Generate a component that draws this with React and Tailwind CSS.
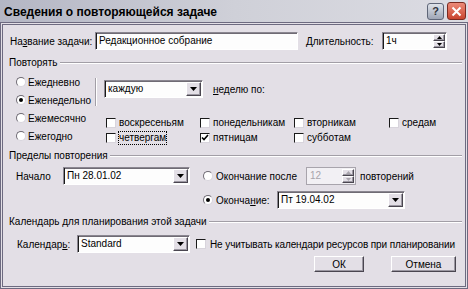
import React from "react";

const sunken =
  "border border-t-[#8a8690] border-l-[#8a8690] border-b-white border-r-white shadow-[inset_1px_0_0_#1a1a1a,inset_0_1px_0_#6f6b74]";
const raised =
  "border border-t-white border-l-white border-b-[#4a4650] border-r-[#4a4650] shadow-[inset_-1px_-1px_0_#9c98a2]";

function Etched({ className = "" }) {
  return <div className={`h-[2px] border-t border-t-[#a29ea6] border-b border-b-white ${className}`} />;
}

function GroupHeader({ title, mt }) {
  return (
    <div className={`flex items-center h-[12px] pl-[6px] pr-[3px] ${mt}`}>
      <span className="whitespace-nowrap leading-none">{title}</span>
      <Etched className="flex-1 ml-[2px]" />
    </div>
  );
}

function DropButton() {
  return (
    <div className={`w-[15px] h-full bg-[#e3dfe6] flex items-center justify-center ${raised}`}>
      <svg width="7" height="4" viewBox="0 0 7 4">
        <path d="M0 0h7L3.5 4z" fill="#000" />
      </svg>
    </div>
  );
}

function Combo({ value, w }) {
  return (
    <div className={`flex items-stretch h-[18px] bg-[#fdfdfd] ${sunken} ${w}`}>
      <span className="flex-1 pl-[3px] leading-[16px] whitespace-nowrap">{value}</span>
      <div className="p-[1px] h-full">
        <DropButton />
      </div>
    </div>
  );
}

function SpinButtons({ disabled }) {
  const c = disabled ? "#a8a4ac" : "#000";
  return (
    <div className="flex flex-col w-[14px] h-full p-[1px] gap-0">
      {[0, 1].map((i) => (
        <div key={i} className={`flex-1 bg-[#e3dfe6] flex items-center justify-center ${raised}`}>
          <svg width="5" height="3" viewBox="0 0 5 3">
            <path d={i === 0 ? "M0 3h5L2.5 0z" : "M0 0h5L2.5 3z"} fill={c} />
          </svg>
        </div>
      ))}
    </div>
  );
}

function Radio({ checked }) {
  return (
    <div className="w-[10px] h-[10px] rounded-full bg-white border border-t-[#6f6b74] border-l-[#6f6b74] border-b-[#d8d4dc] border-r-[#d8d4dc] flex items-center justify-center shrink-0">
      {checked && <div className="w-[4px] h-[4px] rounded-full bg-black" />}
    </div>
  );
}

function Check({ checked }) {
  return (
    <div className="w-[10px] h-[10px] bg-white border border-t-[#1a1a1a] border-l-[#1a1a1a] border-b-[#d8d4dc] border-r-[#d8d4dc] flex items-center justify-center shrink-0">
      {checked && (
        <svg width="8" height="8" viewBox="0 0 8 8">
          <path d="M1 3.5l2 2 4-4.5" stroke="#000" strokeWidth="1.6" fill="none" />
        </svg>
      )}
    </div>
  );
}

function CheckItem({ label, checked, focus }) {
  return (
    <div className="flex items-center gap-[3px] h-[15px]">
      <Check checked={checked} />
      <span className={`whitespace-nowrap leading-[12px] ${focus ? "outline outline-1 outline-dotted outline-black" : ""}`}>
        {label}
      </span>
    </div>
  );
}

function RadioItem({ label, checked }) {
  return (
    <div className="flex items-center gap-[2px] h-[18px]">
      <Radio checked={checked} />
      <span className="whitespace-nowrap">{label}</span>
    </div>
  );
}

export default function App() {
  return (
    <div className="w-[468px] h-[289px] bg-[#e3dfe6] font-['Liberation_Sans',Arial,sans-serif] text-[10px] text-black overflow-hidden">
      {/* title bar */}
      <div className="h-[22px] flex items-center bg-gradient-to-r from-[#b4b6c4] via-[#cfd0d8] to-[#dcdce3] pl-[4px] pr-[2px]">
        <span className="flex-1 font-bold text-[12px] pt-[2px] whitespace-nowrap">Сведения о повторяющейся задаче</span>
        <div className="w-[17px] h-[17px] rounded-[3px] border border-[#5f6678] bg-gradient-to-b from-[#dfe3ea] to-[#9fa6b6] flex items-center justify-center text-[11px] font-bold text-[#30343e]">
          ?
        </div>
        <div className="ml-[3px] w-[19px] h-[18px] rounded-[3px] border border-[#7a2a20] bg-gradient-to-b from-[#ec8a78] to-[#c8442e] flex items-center justify-center">
          <svg width="11" height="11" viewBox="0 0 11 11">
            <path d="M1.5 1.5l8 8M9.5 1.5l-8 8" stroke="#fff" strokeWidth="2" />
          </svg>
        </div>
      </div>

      {/* body */}
      <div className="h-[267px] border-[3px] border-double border-[#6d6a80] flex flex-col">
        {/* row 1 */}
        <div className="flex items-center h-[18px] mt-[7px] pl-[7px]">
          <span className="w-[85px] whitespace-nowrap">
            На<span className="underline">з</span>вание задачи:
          </span>
          <div className={`w-[203px] h-[18px] bg-[#fdfdfd] pl-[3px] leading-[16px] ${sunken}`}>Редакционное собрание</div>
          <span className="w-[76px] ml-[8px] whitespace-nowrap">
            <span className="underline">Д</span>лительность:
          </span>
          <div className={`w-[65px] h-[18px] bg-[#fdfdfd] flex ${sunken}`}>
            <span className="flex-1 pl-[3px] leading-[16px]">1ч</span>
            <SpinButtons />
          </div>
        </div>

        <GroupHeader title="Повторять" mt="mt-[7px]" />

        {/* repeat section */}
        <div className="flex pl-[13px] mt-[4px]">
          <div className="w-[79px] flex flex-col">
            <RadioItem label="Ежедневно" />
            <RadioItem label="Еженедельно" checked />
            <RadioItem label="Ежемесячно" />
            <RadioItem label="Ежегодно" />
          </div>
          <div className="flex flex-col">
            <div className="flex items-start h-[33px]">
              <div className="w-[2px] h-[28px] mt-[5px] border-l border-l-[#a29ea6] border-r border-r-white" />
              <div className="ml-[7px] mt-[7px] flex items-center">
                <Combo value="каждую" w="w-[99px]" />
                <span className="ml-[10px] whitespace-nowrap">
                  <span className="underline">н</span>еделю по:
                </span>
              </div>
            </div>
            <div className="grid grid-cols-[94px_94px_95px_auto] pl-[11px] mt-[9px]">
              <CheckItem label="воскресеньям" />
              <CheckItem label="понедельникам" />
              <CheckItem label="вторникам" />
              <CheckItem label="средам" />
              <CheckItem label="четвергам" focus />
              <CheckItem label="пятницам" checked />
              <CheckItem label="субботам" />
            </div>
          </div>
        </div>

        <GroupHeader title="Пределы повторения" mt="mt-[5px]" />

        <div className="flex items-center h-[18px] mt-[5px] pl-[13px]">
          <span className="w-[47px]">Начало</span>
          <Combo value="Пн 28.01.02" w="w-[127px]" />
          <div className="ml-[13px] flex items-center gap-[3px]">
            <Radio />
            <span className="w-[90px] whitespace-nowrap">Окончание после</span>
          </div>
          <div className="w-[50px] h-[18px] flex bg-[#f2f0f4] border border-[#a8a4ac]">
            <span className="flex-1 pl-[3px] leading-[16px] text-[#a8a4ac]">12</span>
            <SpinButtons disabled />
          </div>
          <span className="ml-[4px] whitespace-nowrap">повторений</span>
        </div>

        <div className="flex items-center h-[18px] mt-[6px] pl-[200px]">
          <div className="flex items-center gap-[3px]">
            <Radio checked />
            <span className="w-[61px] whitespace-nowrap">
              Оконча<span className="underline">н</span>ие:
            </span>
          </div>
          <Combo value="Пт 19.04.02" w="w-[128px]" />
        </div>

        <GroupHeader title="Календарь для планирования этой задачи" mt="mt-[7px]" />

        <div className="flex items-center h-[18px] mt-[7px] pl-[14px]">
          <span className="w-[60px] whitespace-nowrap">
            Календар<span className="underline">ь</span>:
          </span>
          <Combo value="Standard" w="w-[113px]" />
          <div className="ml-[6px] flex items-center gap-[4px]">
            <Check />
            <span className="whitespace-nowrap tracking-[-0.1px]">Не учитывать календари ресурсов при планировании</span>
          </div>
        </div>

        <div className="flex justify-end items-center h-[16px] mt-[3px] pr-[9px]">
          <div className={`w-[50px] h-[16px] flex items-center justify-center bg-[#e3dfe6] ${raised}`}>ОК</div>
          <div className={`w-[65px] h-[16px] ml-[27px] flex items-center justify-center bg-[#e3dfe6] ${raised}`}>Отмена</div>
        </div>
      </div>
    </div>
  );
}
